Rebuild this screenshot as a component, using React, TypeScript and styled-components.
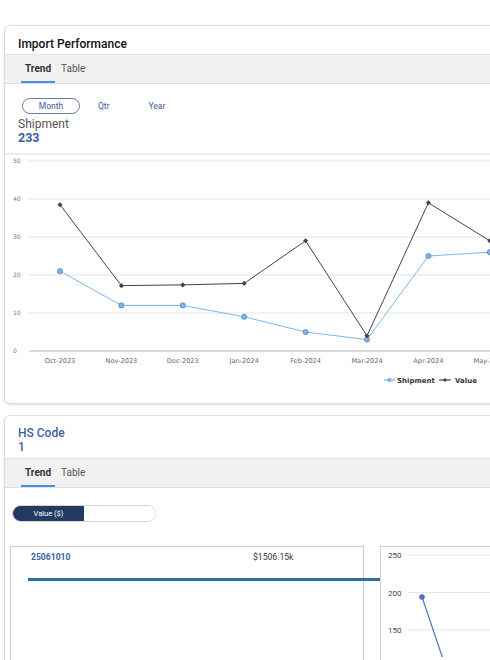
import React, { FC } from "react";
import styled, { createGlobalStyle } from "styled-components";

const GlobalStyle = createGlobalStyle`
  html, body {
    margin: 0;
    padding: 0;
    background: #ffffff;
    font-family: Roboto, "Liberation Sans", Arial, sans-serif;
    overflow: hidden;
  }
`;

const months = ["Oct-2023", "Nov-2023", "Dec-2023", "Jan-2024", "Feb-2024", "Mar-2024", "Apr-2024", "May-2024"];
const shipment = [21, 12, 12, 9, 5, 3, 25, 26];
const value = [38.5, 17.2, 17.4, 17.8, 29, 4, 39, 29];

const X0 = 55;
const STEP = 61.4;
const BASE = 196;
const UNIT = 3.8;
const px = (i: number) => X0 + i * STEP;
const py = (v: number) => BASE - v * UNIT;

const TrendChart: FC = () => {
  const ship = shipment.map((v, i) => `${px(i)},${py(v)}`).join(" ");
  const val = value.map((v, i) => `${px(i)},${py(v)}`).join(" ");
  return (
    <SChart width="600" height="248" viewBox="0 0 600 248">
      {[0, 10, 20, 30, 40, 50].map((t) => (
        <g key={t}>
          <line x1="24" x2="600" y1={py(t)} y2={py(t)} stroke={t === 0 ? "#b8b8b8" : "#e4e4e4"} strokeWidth="1" />
          <text x="8" y={py(t) + 2} fontSize="6" fill="#777">{t}</text>
        </g>
      ))}
      {months.map((m, i) => (
        <text key={m} x={px(i)} y="207.5" fontSize="6.6" fill="#666" textAnchor="middle">{m}</text>
      ))}
      <polyline points={ship} fill="none" stroke="#7cb5ec" strokeWidth="1" />
      {shipment.map((v, i) => (
        <circle key={i} cx={px(i)} cy={py(v)} r="2.6" fill="#7cb5ec" stroke="#4a6f99" strokeWidth="0.6" />
      ))}
      <polyline points={val} fill="none" stroke="#434348" strokeWidth="1" />
      {value.map((v, i) => (
        <rect key={i} x={px(i) - 1.8} y={py(v) - 1.8} width="3.6" height="3.6" fill="#434348" transform={`rotate(45 ${px(i)} ${py(v)})`} />
      ))}
      <g fontSize="7" fontWeight="bold" fill="#333">
        <line x1="379" x2="390" y1="225" y2="225" stroke="#7cb5ec" strokeWidth="1.2" />
        <circle cx="384.5" cy="225" r="2.2" fill="#7cb5ec" />
        <text x="392" y="227.5">Shipment</text>
        <line x1="434" x2="446" y1="225" y2="225" stroke="#434348" strokeWidth="1.2" />
        <rect x="438.5" y="223.5" width="3" height="3" fill="#434348" transform="rotate(45 440 225)" />
        <text x="450" y="227.5">Value</text>
      </g>
    </SChart>
  );
};

const MiniChart: FC = () => (
  <svg width="120" height="110" viewBox="0 0 120 110">
    {[250, 200, 150].map((t, i) => (
      <g key={t}>
        <line x1="27" x2="120" y1={8 + i * 37.5} y2={8 + i * 37.5} stroke="#e6e6e6" />
        <text x="7" y={11 + i * 37.5} fontSize="8" fill="#444" fontFamily="Roboto, sans-serif">{t}</text>
      </g>
    ))}
    <line x1="41" y1="50" x2="62" y2="112" stroke="#5470c6" strokeWidth="1.2" />
    <circle cx="41" cy="50" r="2.8" fill="#5470c6" />
  </svg>
);

type TabsProps = { active: string };

const Tabs: FC<TabsProps> = ({ active }) => (
  <STabBar>
    {["Trend", "Table"].map((t) => (
      <STab key={t} $active={t === active}>{t}</STab>
    ))}
  </STabBar>
);

const App: FC = () => {
  return (
    <>
      <GlobalStyle />
      <SPage>
        <SCard>
          <SCardTitle>Import Performance</SCardTitle>
          <Tabs active="Trend" />
          <SPeriods>
            <SPeriod $active>Month</SPeriod>
            <SPeriod>Qtr</SPeriod>
            <SPeriod>Year</SPeriod>
          </SPeriods>
          <SMetric>
            <SMetricLabel>Shipment</SMetricLabel>
            <SMetricValue>233</SMetricValue>
          </SMetric>
          <SDivider />
          <TrendChart />
        </SCard>

        <SCard>
          <SHsHead>
            <SHsTitle>HS Code</SHsTitle>
            <SHsTitle>1</SHsTitle>
          </SHsHead>
          <Tabs active="Trend" />
          <SToggle>
            <SToggleOpt $active>Value ($)</SToggleOpt>
            <SToggleOpt />
          </SToggle>
          <SPanels>
            <SListPanel>
              <SListRow>
                <SCode>25061010</SCode>
                <SAmount>$1506.15k</SAmount>
              </SListRow>
              <SBar />
            </SListPanel>
            <SChartPanel>
              <MiniChart />
            </SChartPanel>
          </SPanels>
        </SCard>
      </SPage>
    </>
  );
};

const SPage = styled.div`
  display: flex;
  flex-direction: column;
  gap: 11px;
  padding: 25px 0 0 4px;
  width: 620px;
`;

const SCard = styled.div`
  width: 600px;
  border: 1px solid #dcdcdc;
  border-radius: 6px;
  box-shadow: 0 1px 3px rgba(0, 0, 0, 0.12);
  background: #fff;
  overflow: hidden;
`;

const SCardTitle = styled.div`
  height: 28px;
  padding: 11px 0 0 13px;
  box-sizing: border-box;
  font-size: 12px;
  font-weight: 500;
  color: #111;
`;

const STabBar = styled.div`
  display: flex;
  gap: 2px;
  height: 30px;
  padding-left: 16px;
  background: #f1f1f1;
  border-top: 1px solid #e4e4e4;
  border-bottom: 1px solid #dedede;
  box-sizing: border-box;
`;

const STab = styled.div<{ $active?: boolean }>`
  display: flex;
  align-items: center;
  padding: 1px 4px 0;
  font-size: 10px;
  font-weight: ${(p) => (p.$active ? 700 : 400)};
  color: ${(p) => (p.$active ? "#333" : "#555")};
  border-bottom: 2px solid ${(p) => (p.$active ? "#4a90e2" : "transparent")};
`;

const SPeriods = styled.div`
  display: flex;
  align-items: center;
  gap: 16px;
  padding: 14px 0 0 17px;
`;

const SPeriod = styled.div<{ $active?: boolean }>`
  width: ${(p) => (p.$active ? "54px" : "auto")};
  height: 14px;
  padding: 0 1px;
  margin-right: ${(p) => (p.$active ? "0" : "19px")};
  display: flex;
  align-items: center;
  justify-content: center;
  font-size: 8.5px;
  color: #3e5c9a;
  border: 1px solid ${(p) => (p.$active ? "#6c7fa8" : "transparent")};
  border-radius: 8px;
`;

const SMetric = styled.div`
  display: flex;
  flex-direction: column;
  padding: 3px 0 0 13px;
  line-height: 14px;
`;

const SMetricLabel = styled.span`
  font-size: 12px;
  color: #555;
`;

const SMetricValue = styled.span`
  font-size: 12.5px;
  font-weight: 700;
  color: #3b5ea6;
`;

const SDivider = styled.div`
  height: 2px;
  margin-top: 8px;
  background: #eeeeee;
`;

const SChart = styled.svg`
  display: block;
  font-family: "DejaVu Sans", Verdana, sans-serif;
`;

const SHsHead = styled.div`
  display: flex;
  flex-direction: column;
  padding: 10px 0 4px 13px;
  line-height: 14px;
`;

const SHsTitle = styled.span`
  font-size: 12px;
  font-weight: 500;
  color: #3e5fa3;
`;

const SToggle = styled.div`
  display: flex;
  width: 144px;
  height: 17px;
  margin: 17px 0 0 7px;
  border: 1px solid #d6d6d6;
  border-radius: 9px;
  overflow: hidden;
  box-sizing: border-box;
`;

const SToggleOpt = styled.div<{ $active?: boolean }>`
  flex: 1;
  display: flex;
  align-items: center;
  justify-content: center;
  font-size: 7.5px;
  color: #fff;
  background: ${(p) => (p.$active ? "#233a63" : "#fff")};
`;

const SPanels = styled.div`
  display: flex;
  gap: 16px;
  margin: 24px 0 0 5px;
  height: 120px;
`;

const SListPanel = styled.div`
  width: 352px;
  border: 1px solid #cfcfcf;
  border-bottom: none;
  box-shadow: 0 0 2px rgba(0, 0, 0, 0.08);
`;

const SListRow = styled.div`
  display: flex;
  padding: 5px 0 0 20px;
  font-size: 8.6px;
`;

const SCode = styled.span`
  width: 222px;
  font-weight: 700;
  color: #3e5fa3;
`;

const SAmount = styled.span`
  color: #333;
`;

const SBar = styled.div`
  width: 352px;
  height: 3px;
  margin: 16px 0 0 17px;
  background: #2f6ea5;
  position: relative;
`;

const SChartPanel = styled.div`
  flex: 1;
  border: 1px solid #cfcfcf;
  border-bottom: none;
`;

export default App;
